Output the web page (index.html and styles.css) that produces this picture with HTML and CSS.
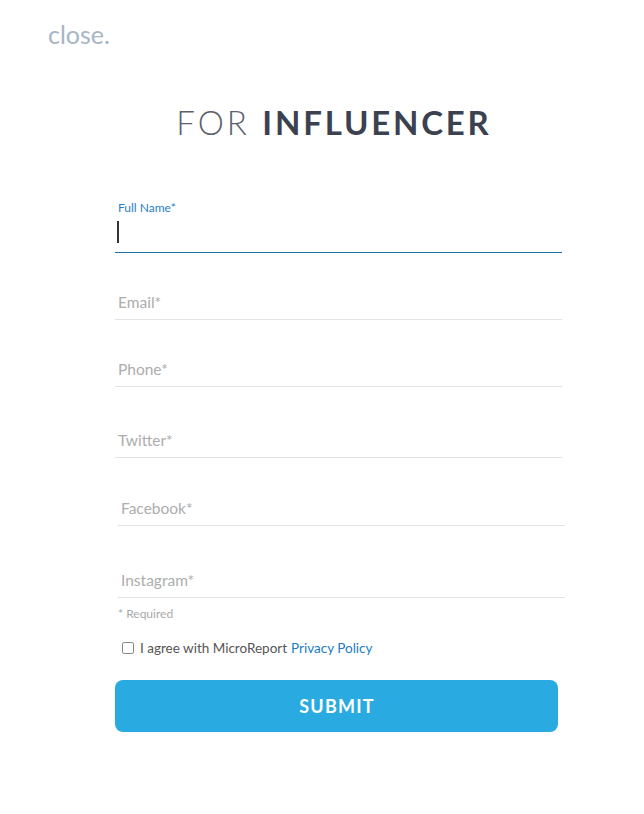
FILE: index.html
```html
<!DOCTYPE html>
<html lang="en">
<head>
<meta charset="utf-8">
<title>For Influencer</title>
<link rel="stylesheet" href="styles.css">
</head>
<body>
<div class="page">
  <a class="close" href="#">close.</a>
  <div class="form-wrap">
    <h1 class="title"><span class="title-light">FOR</span> <span class="title-bold">INFLUENCER</span></h1>
    <form class="form">
      <div class="field field--active">
        <label class="field-label">Full Name*</label>
        <div class="field-input"><span class="caret"></span></div>
      </div>
      <div class="field field--h67"><span class="placeholder">Email*</span></div>
      <div class="field field--h67"><span class="placeholder">Phone*</span></div>
      <div class="field field--h71"><span class="placeholder">Twitter*</span></div>
      <div class="field field--h68 field--shift"><span class="placeholder">Facebook*</span></div>
      <div class="field field--h72 field--shift"><span class="placeholder">Instagram*</span></div>
      <p class="required">* Required</p>
      <label class="agree"><span class="checkbox"></span>I agree with MicroReport <a href="#" class="policy">Privacy Policy</a></label>
      <button type="button" class="submit">SUBMIT</button>
    </form>
  </div>
</div>
</body>
</html>
```
FILE: styles.css
```css
html, body {
  margin: 0;
  padding: 0;
  background: #ffffff;
}
body {
  font-family: "Lato", "Open Sans", sans-serif;
}
.page {
  padding-top: 19px;
}
.close {
  display: block;
  margin-left: 48px;
  font-size: 25px;
  line-height: 30px;
  color: #a7b5c4;
  text-decoration: none;
  width: max-content;
}
.form-wrap {
  margin-left: 115px;
  width: 447px;
}
.title {
  margin: 53px 0 0 0;
  text-align: center;
  font-size: 33px;
  line-height: 40px;
  font-weight: normal;
  padding-right: 9px;
  letter-spacing: 3px;
  color: #3c4150;
}
.title-light {
  font-weight: 300;
  color: #5b606c;
  margin-right: 1px;
}
.title-bold {
  font-weight: 700;
  letter-spacing: 2.8px;
}
.form {
  margin: 59px 0 0 0;
  display: flex;
  flex-direction: column;
}
.field {
  box-sizing: border-box;
  display: flex;
  align-items: flex-end;
  border-bottom: 1px solid #e3e3e3;
  padding: 0 0 8px 3px;
  width: 447px;
}
.field--active {
  flex-direction: column;
  align-items: flex-start;
  justify-content: flex-start;
  border-bottom: 1px solid #1b6fae;
  padding: 0 0 0 3px;
  height: 52px;
}
.field-label {
  font-size: 12px;
  line-height: 14px;
  color: #1f80c8;
}
.field-input {
  height: 38px;
  display: flex;
  align-items: flex-start;
}
.caret {
  display: block;
  width: 1.5px;
  height: 22px;
  margin-top: 6px;
  margin-left: -1px;
  background: #333;
}
.field--h67 { height: 67px; }
.field--h71 { height: 71px; }
.field--h68 { height: 68px; }
.field--h72 { height: 72px; }
.field--shift { margin-left: 3px; }
.placeholder {
  font-size: 15.5px;
  line-height: 18px;
  color: #adadad;
}
.required {
  margin: 9px 0 0 3px;
  font-size: 12px;
  line-height: 14px;
  color: #a9a9a9;
}
.agree {
  display: flex;
  align-items: center;
  margin: 19px 0 0 7px;
  font-size: 13.5px;
  line-height: 16px;
  color: #555555;
}
.checkbox {
  box-sizing: border-box;
  width: 12px;
  height: 12px;
  border: 1px solid #8a8a8a;
  border-radius: 2px;
  margin-right: 6px;
  background: #fff;
}
.policy {
  color: #1b7cc4;
  text-decoration: none;
  margin-left: 4px;
}
.submit {
  margin-top: 24px;
  width: 443px;
  height: 52px;
  border: none;
  border-radius: 8px;
  background: #29abe2;
  color: #ffffff;
  font-family: "Lato", sans-serif;
  font-size: 18px;
  font-weight: 700;
  letter-spacing: 1.2px;
  padding: 0 0 0 1px;
}
```
